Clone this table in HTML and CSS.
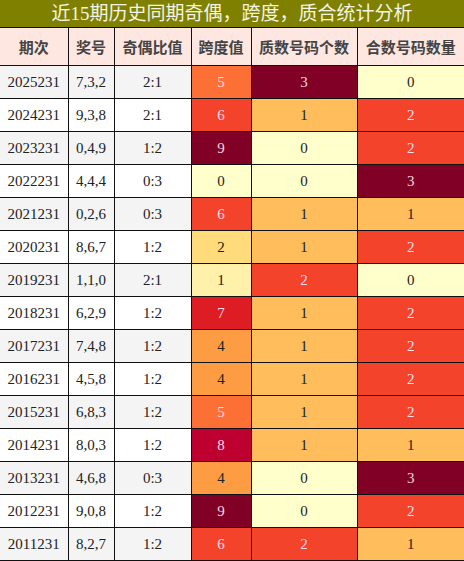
FILE: index.html
```html
<!DOCTYPE html>
<html lang="zh-CN">
  <head>
    <meta charset="UTF-8">
    <title>近15期历史同期奇偶，跨度，质合统计分析</title>
    <link rel="stylesheet" href="styles.css">
  </head>
  <body>
    <div class="title">近15期历史同期奇偶，跨度，质合统计分析</div>
    <table class="stats">
      <colgroup>
        <col style="width:68px">
        <col style="width:46px">
        <col style="width:77px">
        <col style="width:60px">
        <col style="width:106px">
        <col style="width:107px">
      </colgroup>
      <thead>
        <tr>
          <th>期次</th><th>奖号</th><th>奇偶比值</th><th>跨度值</th><th>质数号码个数</th><th>合数号码数量</th>
        </tr>
      </thead>
      <tbody>
        <tr><td>2025231</td><td>7,3,2</td><td>2:1</td><td class="s5">5</td><td class="n3">3</td><td class="n0">0</td></tr>
        <tr><td>2024231</td><td>9,3,8</td><td>2:1</td><td class="s6">6</td><td class="n1">1</td><td class="n2">2</td></tr>
        <tr><td>2023231</td><td>0,4,9</td><td>1:2</td><td class="s9">9</td><td class="n0">0</td><td class="n2">2</td></tr>
        <tr><td>2022231</td><td>4,4,4</td><td>0:3</td><td class="s0">0</td><td class="n0">0</td><td class="n3">3</td></tr>
        <tr><td>2021231</td><td>0,2,6</td><td>0:3</td><td class="s6">6</td><td class="n1">1</td><td class="n1">1</td></tr>
        <tr><td>2020231</td><td>8,6,7</td><td>1:2</td><td class="s2">2</td><td class="n1">1</td><td class="n2">2</td></tr>
        <tr><td>2019231</td><td>1,1,0</td><td>2:1</td><td class="s1">1</td><td class="n2">2</td><td class="n0">0</td></tr>
        <tr><td>2018231</td><td>6,2,9</td><td>1:2</td><td class="s7">7</td><td class="n1">1</td><td class="n2">2</td></tr>
        <tr><td>2017231</td><td>7,4,8</td><td>1:2</td><td class="s4">4</td><td class="n1">1</td><td class="n2">2</td></tr>
        <tr><td>2016231</td><td>4,5,8</td><td>1:2</td><td class="s4">4</td><td class="n1">1</td><td class="n2">2</td></tr>
        <tr><td>2015231</td><td>6,8,3</td><td>1:2</td><td class="s5">5</td><td class="n1">1</td><td class="n2">2</td></tr>
        <tr><td>2014231</td><td>8,0,3</td><td>1:2</td><td class="s8">8</td><td class="n1">1</td><td class="n1">1</td></tr>
        <tr><td>2013231</td><td>4,6,8</td><td>0:3</td><td class="s4">4</td><td class="n0">0</td><td class="n3">3</td></tr>
        <tr><td>2012231</td><td>9,0,8</td><td>1:2</td><td class="s9">9</td><td class="n0">0</td><td class="n2">2</td></tr>
        <tr><td>2011231</td><td>8,2,7</td><td>1:2</td><td class="s6">6</td><td class="n2">2</td><td class="n1">1</td></tr>
      </tbody>
    </table>
  </body>
</html>
```

FILE: styles.css
```css
* {
    margin: 0;
    padding: 0;
    box-sizing: border-box;
}

body {
    font-family: "Liberation Serif", "Noto Sans CJK SC", serif;
    background: #fff;
    color: #222;
    width: 464px;
    overflow: hidden;
}

.title {
    height: 27px;
    line-height: 27px;
    background: #808000;
    color: #f4f4e4;
    font-size: 19px;
    text-align: center;
}

.stats {
    width: 464px;
    border-collapse: collapse;
    table-layout: fixed;
}

.stats th,
.stats td {
    border: 1px solid #111;
    text-align: center;
    padding: 0;
}

.stats th {
    height: 38px;
    background: #fee6e1;
    color: #444;
    font-family: "Noto Sans CJK SC", sans-serif;
    font-weight: bold;
    font-size: 15px;
}

.stats td {
    height: 33px;
    font-size: 15px;
}

.stats th:first-child,
.stats td:first-child {
    border-left: none;
}

.stats th:last-child,
.stats td:last-child {
    border-right: none;
}

.stats tbody tr:nth-child(odd) {
    background: #f4f4f4;
}

/* span colours */
.s0 { background: #ffffcc; }
.s1 { background: #fff0aa; }
.s2 { background: #ffdb7c; }
.s4 { background: #fd9c42; }
.s5 { background: #fd7035; color: #fde; }
.s6 { background: #f3432a; color: #fde; }
.s7 { background: #dd1c24; color: #fde; }
.s8 { background: #bd0030; color: #fde; }
.s9 { background: #800026; color: #f0d8dc; }

/* prime / composite counts */
.n0 { background: #ffffcc; }
.n1 { background: #ffbd5c; }
.n2 { background: #f3432a; color: #fde; }
.n3 { background: #800026; color: #f0d8dc; }
```
